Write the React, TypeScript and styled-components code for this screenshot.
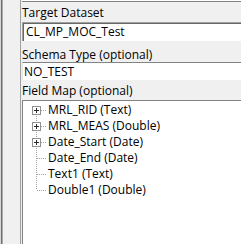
import styled, { createGlobalStyle } from 'styled-components';

const GlobalStyle = createGlobalStyle`
  html, body {
    margin: 0;
    padding: 0;
    background: #f0f0f0;
  }
  body {
    font-family: 'Segoe UI', 'Open Sans', 'Noto Sans', sans-serif;
    font-size: 12px;
    color: #000;
  }
`;

type FieldItem = { label: string; expandable: boolean };

const fields: FieldItem[] = [
  { label: 'MRL_RID (Text)', expandable: true },
  { label: 'MRL_MEAS (Double)', expandable: true },
  { label: 'Date_Start (Date)', expandable: true },
  { label: 'Date_End (Date)', expandable: false },
  { label: 'Text1 (Text)', expandable: false },
  { label: 'Double1 (Double)', expandable: false },
];

const TreeConnector = ({
  expandable,
  first,
  last,
}: {
  expandable: boolean;
  first: boolean;
  last: boolean;
}) => (
  <ConnectorSvg width='15' height='16' viewBox='0 0 15 16'>
    <line
      x1='4.5'
      y1={first ? 8 : 0}
      x2='4.5'
      y2={last ? 8 : 16}
      stroke='#a0a0a0'
      strokeDasharray='1 1'
    />
    <line
      x1={expandable ? 9 : 5}
      y1='8.5'
      x2='15'
      y2='8.5'
      stroke='#a0a0a0'
      strokeDasharray='1 1'
    />
    {expandable && (
      <>
        <rect x='0.5' y='4.5' width='8' height='8' fill='#fff' stroke='#919191' />
        <line x1='2' y1='8.5' x2='7' y2='8.5' stroke='#2b2b2b' />
        <line x1='4.5' y1='6' x2='4.5' y2='11' stroke='#2b2b2b' />
      </>
    )}
  </ConnectorSvg>
);

const App = () => {
  return (
    <>
      <GlobalStyle />
      <Window>
        <Gutter />
        <Main>
          <TopEdge />
          <FieldLabel $gap={3}>Target Dataset</FieldLabel>
          <SunkenInput $gap={2}>CL_MP_MOC_Test</SunkenInput>
          <FieldLabel $gap={6}>Schema Type (optional)</FieldLabel>
          <FlatInput>NO_TEST</FlatInput>
          <FieldLabel $gap={3}>Field Map (optional)</FieldLabel>
          <TreeBox>
            {fields.map((f, i) => (
              <TreeRow key={f.label}>
                <TreeConnector
                  expandable={f.expandable}
                  first={i === 0}
                  last={i === fields.length - 1}
                />
                <TreeText>{f.label}</TreeText>
              </TreeRow>
            ))}
          </TreeBox>
        </Main>
      </Window>
    </>
  );
};

const Window = styled.div`
  width: 241px;
  height: 244px;
  display: flex;
  overflow: hidden;
  background: #f0f0f0;
`;

const Gutter = styled.div`
  box-sizing: border-box;
  width: 21px;
  flex-shrink: 0;
  background: #f0f0f0;
  border-left: 1px solid #d6d6d6;
  border-right: 1px solid #a0a0a0;
  box-shadow: inset 1px 0 #6e6e6e, inset 2px 0 #ababab;
`;

const Main = styled.div`
  flex: 1;
  min-width: 0;
  display: flex;
  flex-direction: column;
  padding-left: 1px;
`;

const TopEdge = styled.div`
  height: 1px;
  background: #fff;
  border-bottom: 1px solid #838383;
`;

const FieldLabel = styled.div<{ $gap: number }>`
  margin-top: ${(p) => p.$gap}px;
  height: 15px;
  line-height: 15px;
  white-space: nowrap;
`;

const SunkenInput = styled.div<{ $gap: number }>`
  box-sizing: border-box;
  margin-top: ${(p) => p.$gap}px;
  height: 19px;
  padding: 1px 0 0 3px;
  line-height: 15px;
  background: #fff;
  border-top: 1px solid #a0a0a0;
  border-left: 1px solid #a0a0a0;
  box-shadow: inset 1px 1px #696969;
  white-space: nowrap;
`;

const FlatInput = styled.div`
  box-sizing: border-box;
  height: 18px;
  padding: 1px 0 0 1px;
  line-height: 15px;
  background: #fff;
  border-top: 1px solid #838383;
  border-left: 1px solid #e3e3e3;
  white-space: nowrap;
`;

const TreeBox = styled.div`
  flex: 1;
  margin-top: 2px;
  padding: 1px 0 0 9px;
  background: #fff;
  border-top: 1px solid #838383;
  border-left: 1px solid #838383;
`;

const TreeRow = styled.div`
  display: flex;
  align-items: center;
  height: 16px;
`;

const ConnectorSvg = styled.svg`
  flex-shrink: 0;
  display: block;
`;

const TreeText = styled.span`
  margin-left: 1px;
  line-height: 16px;
  white-space: nowrap;
`;

export default App;
